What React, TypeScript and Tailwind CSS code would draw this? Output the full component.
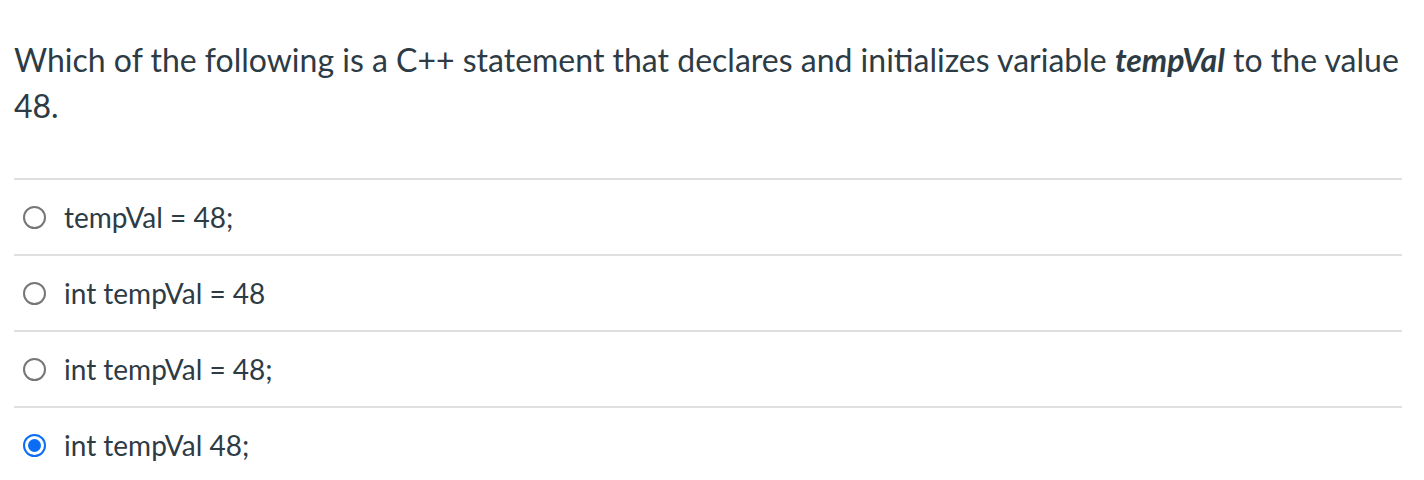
import React from "react";

const options = [
  { text: "tempVal = 48;", selected: false },
  { text: "int tempVal = 48", selected: false },
  { text: "int tempVal = 48;", selected: false },
  { text: "int tempVal 48;", selected: true },
];

function Radio({ selected }: { selected: boolean }) {
  if (selected) {
    return (
      <span className="flex h-[23px] w-[23px] items-center justify-center rounded-full border-2 border-[#0b6cf5] bg-white">
        <span className="h-[13px] w-[13px] rounded-full bg-[#0b6cf5]" />
      </span>
    );
  }
  return <span className="block h-[23px] w-[23px] rounded-full border-2 border-[#767676] bg-white" />;
}

export default function App() {
  return (
    <div
      className="min-h-[480px] w-[1424px] bg-white px-[14px] pt-[37px] text-[#2d3b45]"
      style={{ fontFamily: "Lato, 'Liberation Sans', sans-serif" }}
    >
      <p className="text-[32px] leading-[46px]">
        Which of the following is a C++ statement that declares and initializes variable{" "}
        <strong className="font-bold italic">tempVal</strong> to the value 48.
      </p>
      <div className="mt-[49px] mr-[8px]">
        {options.map((o, i) => (
          <div
            key={i}
            className="flex h-[76px] items-center gap-[18px] border-t-2 border-[#dfdfdf] pl-[9px]"
          >
            <Radio selected={o.selected} />
            <span className="text-[28px]">{o.text}</span>
          </div>
        ))}
      </div>
    </div>
  );
}
